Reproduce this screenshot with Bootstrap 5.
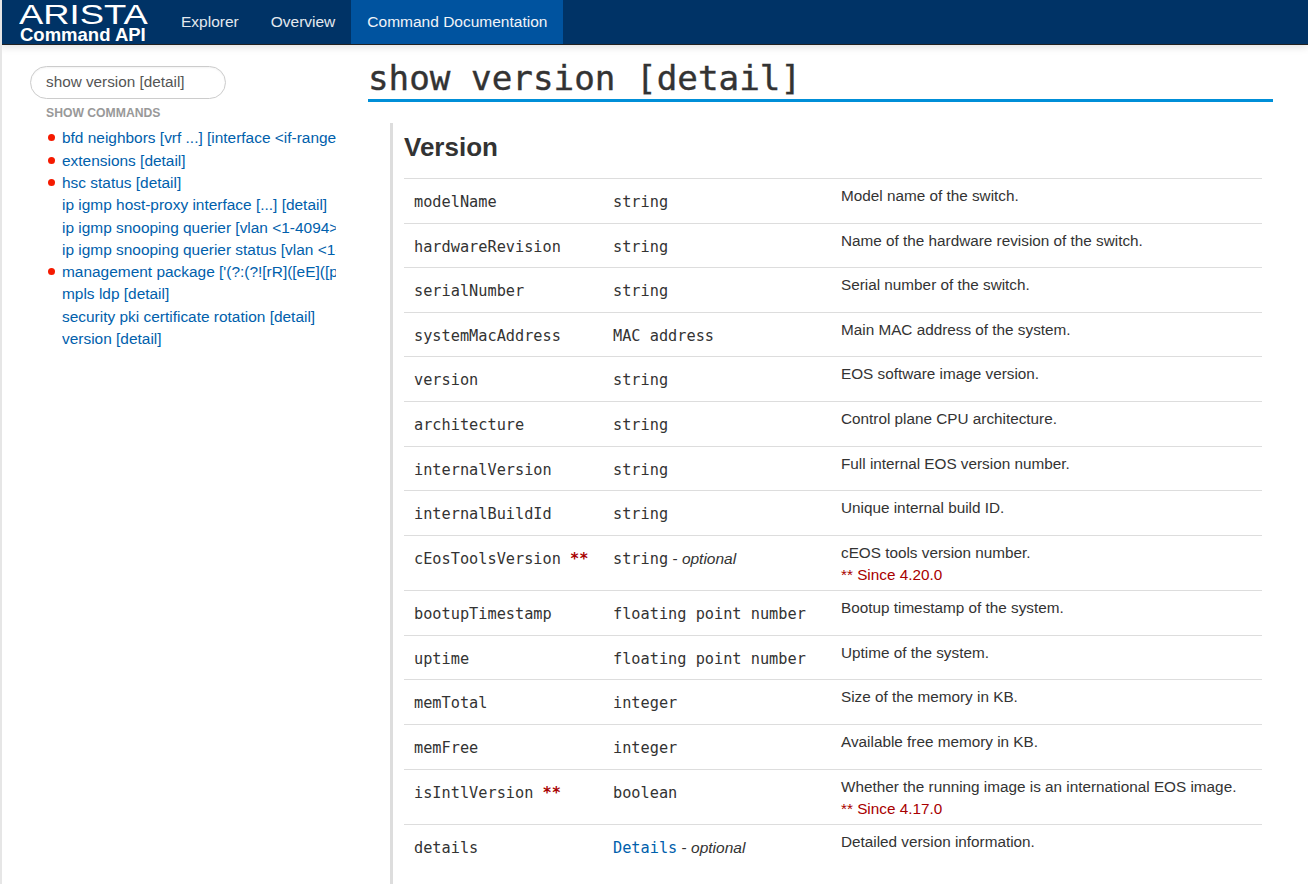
<!DOCTYPE html>
<html lang="en">
<head>
<meta charset="utf-8">
<title>Command API</title>
<link href="https://cdn.jsdelivr.net/npm/bootstrap@5.3.0/dist/css/bootstrap.min.css" rel="stylesheet">
<style>
html,body{height:100%;}
body{font-family:"Liberation Sans",Arial,sans-serif;font-size:15.3px;color:#333;background:#fff;overflow:hidden;border-left:2px solid #e6e6e6;}
.topbar{height:45px;background:#003366;border-bottom:1px solid #222;box-shadow:0 2px 8px rgba(0,0,0,.12);margin-left:-2px;padding:0 0 0 19px;flex-wrap:nowrap;align-items:stretch;justify-content:flex-start;}
.brandbox{width:146px;color:#fff;margin-right:0;padding:0;display:flex;flex-direction:column;text-decoration:none;}
.brand-top{font-size:28px;height:27px;padding-top:3px;line-height:24px;font-weight:400;transform:scaleX(1.3);transform-origin:left top;color:#fff;}
.brand-sub{font-size:18.5px;font-weight:700;line-height:16px;margin-left:1px;color:#fff;white-space:nowrap;}
.topnav{gap:0;}
.topnav .nav-link{color:#e4e9ef;font-size:15.5px;padding:10px 16px 0;height:44px;}
.topnav .nav-link.active{background:#00539f;color:#f1f4f8;}
.leftcol{width:366px;flex:none;padding:21px 30px 0 28px;}
.searchpill{width:196px;height:33px;border:1px solid #ccc;border-radius:17px;padding:0 15px;font-size:15.3px;color:#555;line-height:30px;box-shadow:inset 0 1px 2px rgba(0,0,0,.05);}
.cmdhead{font-size:12.2px;font-weight:700;color:#999;margin:6px 0 0 16px;line-height:16px;}
.cmdlist{list-style:none;margin:6.4px 0 0;padding:0 0 0 32px;width:306px;}
.cmdlist li{height:22.3px;line-height:22.3px;font-size:15.45px;white-space:nowrap;overflow:hidden;}
.cmdlist a{color:#0060ac;text-decoration:none;}
.reddot{position:absolute;left:48px;width:7px;height:7px;border-radius:50%;background:#f51a00;}
.mainpane{flex:1;padding-right:35px;min-width:0;}
.pagetitle{font-family:"DejaVu Sans Mono","Liberation Mono",monospace;font-size:34.25px;font-weight:400;color:#333;line-height:40px;margin:13px 0 0;border-bottom:3px solid #008fd8;height:44px;-webkit-text-stroke:.4px #333;}
.docsec{margin:21px 0 0 22px;border-left:3px solid #ddd;padding:0 10px 0 11px;height:800px;}
.docsec h2{font-size:26px;font-weight:700;color:#333;line-height:30px;margin:0;padding:9px 0 16px;}
.apitable{width:858px;margin:0;table-layout:fixed;border-top:1px solid #ddd;}
.apitable td{padding:7px 10px 0;border-bottom:1px solid #ddd;border-top:0;vertical-align:top;color:#333;font-size:15.3px;line-height:19px;}
.apitable tr:last-child td{border-bottom:0;}
.apitable td.mono{font-family:"DejaVu Sans Mono","Liberation Mono",monospace;font-size:15.25px;padding-top:14px;white-space:nowrap;}
.apitable .c1{width:199px;}
.apitable .c2{width:228px;}
.apitable tr{height:44.6px;}
.apitable tr.tall{height:55.4px;}
.opt{font-family:"Liberation Sans",Arial,sans-serif;font-size:15.5px;line-height:1;}
.stars{color:#a80000;font-weight:700;}
.since{color:#a80000;display:block;margin-top:3px;}
.apitable a{color:#0060ac;text-decoration:none;}
</style>
</head>
<body>
<nav class="navbar topbar">
  <a class="brandbox" href="#"><span class="brand-top">ARISTA</span><span class="brand-sub">Command API</span></a>
  <ul class="nav topnav ms-0">
    <li class="nav-item"><a class="nav-link" href="#">Explorer</a></li>
    <li class="nav-item"><a class="nav-link" href="#">Overview</a></li>
    <li class="nav-item"><a class="nav-link active" href="#">Command Documentation</a></li>
  </ul>
</nav>
<div class="d-flex">
  <aside class="leftcol">
    <div class="searchpill">show version [detail]</div>
    <div class="cmdhead">SHOW COMMANDS</div>
    <ul class="cmdlist">
      <li><a href="#">bfd neighbors [vrf ...] [interface &lt;if-range&gt;] [detail]</a></li>
      <li><a href="#">extensions [detail]</a></li>
      <li><a href="#">hsc status [detail]</a></li>
      <li><a href="#">ip igmp host-proxy interface [...] [detail]</a></li>
      <li><a href="#">ip igmp snooping querier [vlan &lt;1-4094&gt;] [detail]</a></li>
      <li><a href="#">ip igmp snooping querier status [vlan &lt;1-4094&gt;]</a></li>
      <li><a href="#">management package ['(?:(?![rR]([eE]([pP]</a></li>
      <li><a href="#">mpls ldp [detail]</a></li>
      <li><a href="#">security pki certificate rotation [detail]</a></li>
      <li><a href="#">version [detail]</a></li>
    </ul>
    <span class="reddot" style="top:134px"></span>
    <span class="reddot" style="top:157px"></span>
    <span class="reddot" style="top:179px"></span>
    <span class="reddot" style="top:268px"></span>
  </aside>
  <main class="mainpane">
    <h1 class="pagetitle">show version [detail]</h1>
    <section class="docsec">
      <h2>Version</h2>
      <table class="table apitable">
        <tbody>
          <tr><td class="mono c1">modelName</td><td class="mono c2">string</td><td>Model name of the switch.</td></tr>
          <tr><td class="mono">hardwareRevision</td><td class="mono">string</td><td>Name of the hardware revision of the switch.</td></tr>
          <tr><td class="mono">serialNumber</td><td class="mono">string</td><td>Serial number of the switch.</td></tr>
          <tr><td class="mono">systemMacAddress</td><td class="mono">MAC address</td><td>Main MAC address of the system.</td></tr>
          <tr><td class="mono">version</td><td class="mono">string</td><td>EOS software image version.</td></tr>
          <tr><td class="mono">architecture</td><td class="mono">string</td><td>Control plane CPU architecture.</td></tr>
          <tr><td class="mono">internalVersion</td><td class="mono">string</td><td>Full internal EOS version number.</td></tr>
          <tr><td class="mono">internalBuildId</td><td class="mono">string</td><td>Unique internal build ID.</td></tr>
          <tr class="tall"><td class="mono">cEosToolsVersion <span class="stars">**</span></td><td class="mono">string<span class="opt"> - <i>optional</i></span></td><td>cEOS tools version number.<span class="since">** Since 4.20.0</span></td></tr>
          <tr><td class="mono">bootupTimestamp</td><td class="mono">floating point number</td><td>Bootup timestamp of the system.</td></tr>
          <tr><td class="mono">uptime</td><td class="mono">floating point number</td><td>Uptime of the system.</td></tr>
          <tr><td class="mono">memTotal</td><td class="mono">integer</td><td>Size of the memory in KB.</td></tr>
          <tr><td class="mono">memFree</td><td class="mono">integer</td><td>Available free memory in KB.</td></tr>
          <tr class="tall"><td class="mono">isIntlVersion <span class="stars">**</span></td><td class="mono">boolean</td><td>Whether the running image is an international EOS image.<span class="since">** Since 4.17.0</span></td></tr>
          <tr><td class="mono">details</td><td class="mono"><a href="#">Details</a><span class="opt"> - <i>optional</i></span></td><td>Detailed version information.</td></tr>
        </tbody>
      </table>
    </section>
  </main>
</div>
<script src="https://cdn.jsdelivr.net/npm/bootstrap@5.3.0/dist/js/bootstrap.bundle.min.js"></script>
</body>
</html>
